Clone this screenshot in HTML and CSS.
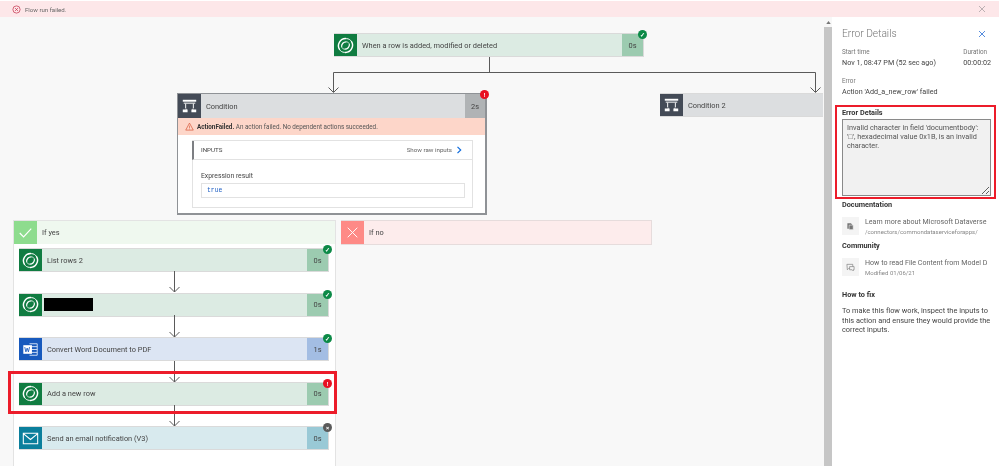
FILE: index.html
```html
<!DOCTYPE html>
<html lang="en">
<head>
    <meta charset="UTF-8">
    <title>Flow run failed</title>
    <link rel="stylesheet" href="styles.css">
</head>
<body>
    <svg class="defs" width="0" height="0">
        <symbol id="dataverse" viewBox="0 0 24 24">
            <g fill="none" stroke="#fff">
                <path stroke-width="1.500" d="M13 4.800A7.500 7.500 0 0 0 6 16.500"/>
                <path stroke-width="1.500" d="M11 19.200A7.500 7.500 0 0 0 18 7.500"/>
                <path stroke-width="1" d="M13 4.800C15.500 5 17 6 18 7.500M11 19.200C8.500 19 7 18 6 16.500"/>
                <path stroke-width="1.300" d="M8 13.500C7.500 10.500 10 8 13 8.200"/>
                <path stroke-width="1.300" d="M16 10.500C16.500 13.500 14 16 11 15.800"/>
                <path stroke-width=".8" d="M13 8.200C14.500 8.300 15.700 9.200 16 10.500M11 15.800C9.500 15.700 8.300 14.800 8 13.500"/>
            </g>
        </symbol>
        <symbol id="condition" viewBox="0 0 24 24">
            <g fill="#fff">
                <rect x="5" y="5" width="14" height="2"/>
                <rect x="6" y="8" width="12" height="1"/>
                <rect x="7.500" y="9" width="1" height="5"/>
                <rect x="15.500" y="9" width="1" height="5"/>
                <path d="M5 15h3l.5-1 .5 1h1v3H5zM14 15h1l.5-1 .5 1h3v3h-5z"/>
            </g>
        </symbol>
    </svg>

    <div class="notice">
        <svg class="notice-icon" viewBox="0 0 10 10">
            <circle cx="5" cy="5" r="4" fill="none" stroke="#c4314b" stroke-width=".8"/>
            <path d="M3.400 3.400l3.200 3.200M6.600 3.400l-3.200 3.200" stroke="#c4314b" stroke-width=".8"/>
        </svg>
        <span class="notice-text">Flow run failed.</span>
        <svg class="notice-close" viewBox="0 0 8 8">
            <path d="M1 1l6 6M7 1l-6 6" stroke="#a9a2a3" stroke-width=".8"/>
        </svg>
    </div>

    <div class="main">
        <div class="canvas">
            <svg class="wires" width="824" height="449" viewBox="0 0 824 449">
                <g fill="none" stroke="#5a5a5a" stroke-width="1">
                    <path d="M489.500 40v15M333.500 75V55.500H815.500V75"/>
                    <path d="M328.500 70.500l5 5 5-5M810.500 70.500l5 5 5-5"/>
                    <path d="M174.500 254v21M169.500 270l5 5 5-5"/>
                    <path d="M174.500 298v22M169.500 315l5 5 5-5"/>
                    <path d="M174.500 344v21M169.500 360l5 5 5-5"/>
                    <path d="M174.500 388v21M169.500 404l5 5 5-5"/>
                </g>
            </svg>

            <div class="card card-green node-trigger">
                <div class="card-icon"><svg class="glyph"><use href="#dataverse"/></svg></div>
                <div class="card-title">When a row is added, modified or deleted</div>
                <div class="card-time">0s</div>
                <span class="badge badge-ok">&#10003;</span>
            </div>

            <div class="condition node-condition">
                <div class="card card-gray card-flat">
                    <div class="card-icon"><svg class="glyph"><use href="#condition"/></svg></div>
                    <div class="card-title">Condition</div>
                    <div class="card-time">2s</div>
                    <span class="badge badge-fail">!</span>
                </div>
                <div class="failure">
                    <svg class="failure-icon" viewBox="0 0 10 10">
                        <path d="M5 1.200L9.200 9H.8z" fill="none" stroke="#d8593b" stroke-width=".8"/>
                        <path d="M5 4v2.800M5 7.400v.8" stroke="#d8593b" stroke-width=".7"/>
                    </svg>
                    <span><b>ActionFailed.</b> An action failed. No dependent actions succeeded.</span>
                </div>
                <div class="inputs">
                    <div class="inputs-head">
                        <span class="inputs-label">INPUTS</span>
                        <span class="inputs-raw">Show raw inputs</span>
                        <svg class="inputs-arrow" viewBox="0 0 6 8">
                            <path d="M1.500 .8L4.700 4 1.500 7.200" fill="none" stroke="#0f6cde" stroke-width="1.200"/>
                        </svg>
                    </div>
                    <div class="inputs-body">
                        <div class="inputs-name">Expression result</div>
                        <div class="inputs-value">true</div>
                    </div>
                </div>
            </div>

            <div class="card card-gray card-open node-condition2">
                <div class="card-icon"><svg class="glyph"><use href="#condition"/></svg></div>
                <div class="card-title">Condition 2</div>
            </div>

            <div class="branch node-yes">
                <div class="branch-head branch-head-yes">
                    <div class="branch-icon">
                        <svg class="glyph" viewBox="0 0 24 24"><path d="M6 12.500l4 4 8-8.500" fill="none" stroke="#fff" stroke-width="1.200"/></svg>
                    </div>
                    <span>If yes</span>
                </div>
                <div class="steps">
                    <div class="card card-green">
                        <div class="card-icon"><svg class="glyph"><use href="#dataverse"/></svg></div>
                        <div class="card-title">List rows 2</div>
                        <div class="card-time">0s</div>
                        <span class="badge badge-ok">&#10003;</span>
                    </div>
                    <div class="card card-green">
                        <div class="card-icon"><svg class="glyph"><use href="#dataverse"/></svg></div>
                        <div class="card-title card-title-hidden"><span class="redacted"></span></div>
                        <div class="card-time">0s</div>
                        <span class="badge badge-ok">&#10003;</span>
                    </div>
                    <div class="card card-blue">
                        <div class="card-icon">
                            <svg class="glyph" viewBox="0 0 24 24">
                                <path d="M11 6h8v12h-8M13 9h6M13 12h6M13 15h6" fill="none" stroke="#cfe0f7" stroke-width="1"/>
                                <rect x="4.500" y="7.500" width="9" height="9" fill="#fff"/>
                                <path d="M6 9.500l1.200 5 1.300-4 1.300 4 1.200-5" fill="none" stroke="#185abd" stroke-width=".9"/>
                            </svg>
                        </div>
                        <div class="card-title">Convert Word Document to PDF</div>
                        <div class="card-time">1s</div>
                        <span class="badge badge-ok">&#10003;</span>
                    </div>
                    <div class="card card-green">
                        <div class="card-icon"><svg class="glyph"><use href="#dataverse"/></svg></div>
                        <div class="card-title">Add a new row</div>
                        <div class="card-time">0s</div>
                        <span class="badge badge-fail">!</span>
                    </div>
                    <div class="card card-teal">
                        <div class="card-icon">
                            <svg class="glyph" viewBox="0 0 24 24">
                                <path d="M4.500 6.500h15v11h-15zM4.500 7l7.500 6 7.500-6" fill="none" stroke="#fff" stroke-width="1.100"/>
                            </svg>
                        </div>
                        <div class="card-title">Send an email notification (V3)</div>
                        <div class="card-time">0s</div>
                        <span class="badge badge-skip">&#215;</span>
                    </div>
                </div>
            </div>

            <div class="branch-head branch-head-no node-no">
                <div class="branch-icon">
                    <svg class="glyph" viewBox="0 0 24 24"><path d="M7 7l10 10M17 7L7 17" fill="none" stroke="#fff" stroke-width="1"/></svg>
                </div>
                <span>If no</span>
            </div>

            <div class="highlight node-highlight"></div>
        </div>

        <div class="scrollbar">
            <svg class="scrollbar-up" viewBox="0 0 6 4"><path d="M0 4l3-4 3 4z" fill="#777"/></svg>
            <div class="scrollbar-thumb"></div>
        </div>

        <aside class="panel">
            <div class="panel-head">
                <h1 class="panel-title">Error Details</h1>
                <svg class="panel-close" viewBox="0 0 8 8">
                    <path d="M1 1l6 6M7 1l-6 6" stroke="#2b6fd6" stroke-width=".8"/>
                </svg>
            </div>
            <div class="meta-row">
                <div>
                    <div class="label">Start time</div>
                    <div class="value">Nov 1, 08:47 PM (52 sec ago)</div>
                </div>
                <div>
                    <div class="label">Duration</div>
                    <div class="value">00:00:02</div>
                </div>
            </div>
            <div class="label label-error">Error</div>
            <div class="value">Action 'Add_a_new_row' failed</div>

            <div class="error-box">
                <h2 class="heading">Error Details</h2>
                <textarea class="error-text" readonly>Invalid character in field 'documentbody': '&#9633;', hexadecimal value 0x1B, is an invalid character.</textarea>
            </div>

            <h2 class="heading">Documentation</h2>
            <div class="link-row">
                <div class="link-icon">
                    <svg class="link-glyph" viewBox="0 0 10 10">
                        <path d="M1.500 1.500h4l2 2v4h-6z" fill="#767676"/>
                        <path d="M3.500 3.500h4.500v5h-4.500z" fill="#767676" stroke="#f4f4f4" stroke-width=".6"/>
                    </svg>
                </div>
                <div class="link-text">
                    <div class="link-title">Learn more about Microsoft Dataverse</div>
                    <div class="link-sub">/connectors/commondataserviceforapps/</div>
                </div>
            </div>

            <h2 class="heading heading-community">Community</h2>
            <div class="link-row">
                <div class="link-icon">
                    <svg class="link-glyph" viewBox="0 0 10 10">
                        <path d="M1 1.500h6.500v4.500H3L1.500 7.500z" fill="none" stroke="#767676" stroke-width=".7"/>
                        <path d="M4 4h5v3.500h-1v1.200L6.800 7.500H4z" fill="#f4f4f4" stroke="#767676" stroke-width=".7"/>
                    </svg>
                </div>
                <div class="link-text">
                    <div class="link-title">How to read File Content from Model D</div>
                    <div class="link-sub">Modified 01/06/21</div>
                </div>
            </div>

            <h2 class="heading heading-fix">How to fix</h2>
            <p class="fix-text">To make this flow work, inspect the inputs to this action and ensure they would provide the correct inputs.</p>
        </aside>
    </div>
</body>
</html>
```

FILE: styles.css
```css
html, body {
    margin: 0;
    height: 466px;
    overflow: hidden;
}
body {
    font-family: Roboto, Arial, sans-serif;
    font-size: 7.400px;
    color: #444;
    background: #fff;
    filter: blur(.3px);
}
.defs {
    position: absolute;
}

/* top notice */
.notice {
    display: flex;
    align-items: center;
    height: 16px;
    margin-top: 1px;
    padding: 0 13px 0 12px;
    background: #fde7e9;
    color: #666;
    font-size: 6.100px;
}
.notice-icon {
    width: 9px;
    height: 9px;
    margin-right: 4px;
}
.notice-text {
    flex: 1;
}
.notice-close {
    width: 8px;
    height: 8px;
}

.main {
    display: flex;
    height: 449px;
}

/* diagram */
.canvas {
    position: relative;
    width: 824px;
    flex: none;
    background: #f8f8f8;
    overflow: hidden;
}
.wires {
    position: absolute;
    left: 0;
    top: 0;
    z-index: 1;
}

.card {
    position: relative;
    display: flex;
    align-items: stretch;
    height: 24px;
    box-sizing: border-box;
    border: 1px solid #dadada;
    border-left: 0;
}
.card-flat {
    border: 0;
    height: 24px;
}
.card-flat .card-time {
    width: 20px;
}
.card-open {
    border-right: 0;
}
.card-icon {
    display: flex;
    align-items: center;
    justify-content: center;
    width: 23px;
    flex: none;
}
.glyph {
    width: 23px;
    height: 23px;
}
.card-title {
    flex: 1;
    align-self: center;
    padding-left: 5px;
    white-space: nowrap;
}
.card-title-hidden {
    padding-left: 2px;
}
.card-time {
    display: flex;
    align-items: center;
    justify-content: center;
    width: 21px;
    flex: none;
}
.card-green { background: #dcebe3; }
.card-green .card-icon { background: #107c41; }
.card-green .card-time { background: #9ccbb0; }
.card-gray { background: #dcdee0; }
.card-gray .card-icon { background: #444b57; }
.card-gray .card-time { background: #b0b3b5; }
.card-blue { background: #dce5f3; }
.card-blue .card-icon { background: #185abd; }
.card-blue .card-time { background: #a3bde3; }
.card-teal { background: #d8eaee; }
.card-teal .card-icon { background: #0b7f9c; }
.card-teal .card-time { background: #99c9d6; }

/* where each node sits on the canvas */
.node-trigger, .node-condition, .node-condition2, .node-yes, .node-no, .node-highlight {
    position: absolute;
}
.node-trigger {
    left: 334px;
    top: 16px;
    width: 310px;
}
.node-condition {
    left: 177px;
    top: 76px;
    width: 310px;
    z-index: 2;
}
.node-condition2 {
    left: 660px;
    top: 76px;
    width: 163px;
}
.node-yes {
    left: 13px;
    top: 203px;
    width: 323px;
    height: 260px;
}
.node-no {
    left: 341px;
    top: 203px;
    width: 310px;
    border: 1px solid #e6dcdc;
    border-left: 0;
}
.node-no span {
    padding-left: 6px;
}
.node-highlight {
    left: 8px;
    top: 354px;
    width: 323px;
    height: 37px;
    border: 3px solid #ec1c2a;
    z-index: 3;
}

.redacted {
    display: block;
    width: 49px;
    height: 13px;
    background: #000;
}

.badge {
    position: absolute;
    right: -4px;
    top: -4px;
    width: 9px;
    height: 9px;
    border-radius: 50%;
    color: #fff;
    font-size: 6px;
    font-weight: 700;
    line-height: 9px;
    text-align: center;
}
.badge-ok { background: #0c8a47; }
.badge-fail { background: #e81123; }
.badge-skip { background: #5b5b5b; }

/* condition block */
.condition {
    box-sizing: border-box;
    height: 122px;
    border: 1px solid #8f9296;
    border-width: 1px 2px 2px 1px;
    background: #fff;
}
.failure {
    display: flex;
    align-items: center;
    height: 17px;
    padding-left: 7px;
    background: #fdd6c9;
    color: #555;
    font-size: 6.300px;
}
.failure b {
    color: #333;
}
.failure-icon {
    width: 9px;
    height: 9px;
    margin-right: 3px;
}
.inputs {
    height: 68px;
    margin: 5px 12px 0 14px;
    box-sizing: border-box;
    border: 1px solid #e2e2e2;
    font-size: 6.200px;
}
.inputs-head {
    display: flex;
    align-items: center;
    height: 18px;
    padding: 0 10px 0 7px;
    border-left: 2px solid #7d7f83;
    border-bottom: 1px solid #e2e2e2;
    margin-left: -1px;
}
.inputs-label {
    flex: 1;
}
.inputs-raw {
    color: #666;
}
.inputs-arrow {
    width: 6px;
    height: 8px;
    margin-left: 4px;
}
.inputs-body {
    padding: 11px 7px 0 8px;
}
.inputs-name {
    font-size: 6.800px;
    line-height: 10px;
}
.inputs-value {
    height: 15px;
    margin-top: 2px;
    padding: 2px 0 0 5px;
    border: 1px solid #e2e2e2;
    box-sizing: border-box;
    color: #1f5fc4;
    font-family: "Liberation Mono", monospace;
    font-size: 6.400px;
    line-height: 9px;
}

/* branches */
.branch {
    box-sizing: border-box;
    border: 1px solid #e3e3e3;
    background: #fff;
}
.branch-head {
    display: flex;
    align-items: center;
    height: 23px;
    box-sizing: content-box;
}
.branch-head span {
    padding-left: 5px;
}
.branch-head-yes {
    background: #eff8ef;
}
.branch-head-yes .branch-icon {
    background: #8edc8e;
}
.branch-head-no {
    background: #fdecec;
}
.branch-head-no .branch-icon {
    background: #fe8a86;
}
.branch-icon {
    width: 23px;
    height: 23px;
}
.steps {
    display: flex;
    flex-direction: column;
    gap: 20.500px;
    padding: 4px 6px 0 5px;
}

/* scrollbar */
.scrollbar {
    display: flex;
    flex-direction: column;
    align-items: center;
    width: 8px;
    flex: none;
    background: #f8f8f8;
}
.scrollbar-up {
    width: 5px;
    height: 3px;
    margin-top: 4px;
}
.scrollbar-thumb {
    width: 8px;
    flex: 1;
    margin-top: 3px;
    background: #c6c6c6;
}

/* details panel */
.panel {
    flex: 1;
    min-width: 0;
    padding-top: 8px;
    padding-left: 10px;
    background: #fff;
    box-sizing: border-box;
}
.panel-head {
    display: flex;
    align-items: center;
    justify-content: space-between;
    height: 17px;
    padding-right: 13px;
}
.panel-title {
    margin: 0;
    color: #767676;
    font-size: 10.200px;
    font-weight: 300;
}
.panel-close {
    width: 8px;
    height: 8px;
}
.meta-row {
    display: flex;
    justify-content: space-between;
    margin-top: 5px;
    padding-right: 8px;
}
.label {
    color: #767676;
    font-size: 6.300px;
    line-height: 10px;
}
.label-error {
    margin-top: 7px;
}
.value {
    font-size: 7.200px;
    line-height: 12px;
}
.error-box {
    box-sizing: border-box;
    width: 161px;
    height: 94px;
    margin: 7px 0 1px -7px;
    padding: 1px 0 0 5px;
    border: 2px solid #ec1c2a;
}
.heading {
    margin: 0;
    color: #333;
    font-size: 7.300px;
    font-weight: 700;
    line-height: 10px;
}
.error-box .heading {
    margin-bottom: 1px;
}
.error-text {
    display: block;
    box-sizing: border-box;
    width: 149px;
    height: 77px;
    margin: 0;
    padding: 3px 4px;
    border: 1px solid #8a8a8a;
    border-radius: 0;
    outline: 0;
    background: #f1f1f1;
    color: #555;
    font-family: inherit;
    font-size: 7.300px;
    line-height: 9px;
}
.link-row {
    display: flex;
    gap: 6px;
    margin-top: 7px;
}
.link-icon {
    display: flex;
    align-items: center;
    justify-content: center;
    width: 17px;
    height: 18px;
    flex: none;
    background: #f4f4f4;
}
.link-glyph {
    width: 9px;
    height: 9px;
}
.link-text {
    width: 126px;
    white-space: nowrap;
}
.link-title {
    color: #666;
    font-size: 7.100px;
    line-height: 10px;
}
.link-sub {
    color: #888;
    font-size: 6px;
    line-height: 10px;
}
.heading-community {
    margin-top: 4px;
}
.heading-fix {
    margin-top: 12px;
}
.fix-text {
    width: 152px;
    margin: 6px 0 0;
    line-height: 9.500px;
}
```
